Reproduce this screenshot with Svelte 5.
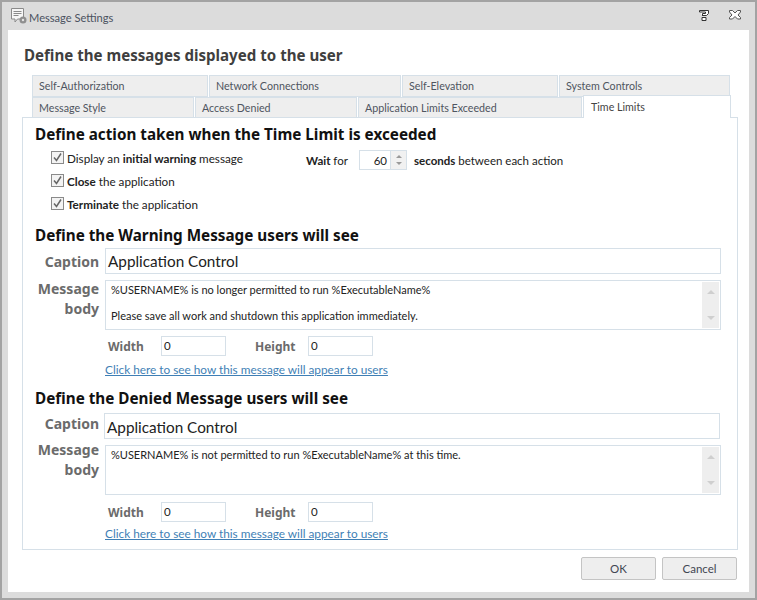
<script>
	const topTabs = ["Self-Authorization", "Network Connections", "Self-Elevation", "System Controls"];
	const bottomTabs = ["Message Style", "Access Denied", "Application Limits Exceeded"];
	const checks = [
		{ pre: "Display an ", bold: "initial warning", post: " message" },
		{ pre: "", bold: "Close", post: " the application" },
		{ pre: "", bold: "Terminate", post: " the application" }
	];

	const sections = [
		{
			title: "Define the Warning Message users will see",
			lines: ["%USERNAME% is no longer permitted to run %ExecutableName%", "", "Please save all work and shutdown this application immediately."],
			second: false
		},
		{
			title: "Define the Denied Message users will see",
			lines: ["%USERNAME% is not permitted to run %ExecutableName% at this time."],
			second: true
		}
	];
</script>

<div class="window">
	<header class="titlebar">
		<svg class="app-icon" width="18" height="18" viewBox="0 0 18 18">
			<path d="M.5 1.500h12v10.500h-6l-2.500 3v-3h-3.500z" fill="#f6f6f6" stroke="#8a8a8a" />
			<path d="M2.500 4.500h8M2.500 6.500h8M2.500 8.500h5" stroke="#8a8a8a" />
			<circle cx="12" cy="13" r="3.500" fill="#8f8f8f" />
			<circle cx="12" cy="13" r="1.200" fill="#e4e4e4" />
		</svg>
		<span class="title">Message Settings</span>
		<svg class="help" width="10" height="11" viewBox="0 0 10 11">
			<path d="M.5 .5h9v3l-2 2h-4.500M.5 .5v1.500h6v1.500h-3v2" fill="#fff" stroke="#333" />
			<path d="M3 7.500h4v3h-4z" fill="#fff" stroke="#333" />
		</svg>
		<svg class="close" width="12" height="10" viewBox="0 0 12 10">
			<path d="M.5 .5h3l2.500 2.500 2.500-2.500h3v1.500l-2.500 3 2.500 2.500v1.500h-3l-2.500-2.500-2.500 2.500h-3v-1.500l2.500-2.500-2.500-3z" fill="#fff" stroke="#555" />
		</svg>
	</header>

	<main class="client">
		<h1>Define the messages displayed to the user</h1>

		<nav class="tabs">
			<div class="tab-row top">
				{#each topTabs as tab}
					<div class="tab">{tab}</div>
				{/each}
			</div>
			<div class="tab-row bottom">
				{#each bottomTabs as tab}
					<div class="tab">{tab}</div>
				{/each}
				<div class="tab active">Time Limits</div>
			</div>
		</nav>

		<section class="panel">
			<h2 class="first">Define action taken when the Time Limit is exceeded</h2>

			<div class="actions">
				<div class="checks">
					{#each checks as check}
						<label class="check">
							<span class="box">
								<svg width="11" height="11" viewBox="0 0 11 11"><path d="M2 5.500l2.500 3 4.500-7" fill="none" stroke="#666" stroke-width="1.500" /></svg>
							</span>
							<span>{check.pre}<b>{check.bold}</b>{check.post}</span>
						</label>
					{/each}
				</div>
				<div class="wait">
					<span class="wait-label"><b>Wait</b> for</span>
					<div class="spin">
						<span class="spin-value">60</span>
						<span class="spin-arrows"><i class="up"></i><i class="down"></i></span>
					</div>
					<span class="wait-tail"><b>seconds</b> between each action</span>
				</div>
			</div>

			{#each sections as section}
				<div class:second={section.second}>
					<h2>{section.title}</h2>
					<div class="field caption-row">
						<span class="field-label">Caption</span>
						<div class="caption-input">Application Control</div>
					</div>
					<div class="field body-row">
						<span class="field-label body-label">Message<br />body</span>
						<div class="body-box">
							<div class="body-text">
								{#each section.lines as line}
									<p>{line}</p>
								{/each}
							</div>
							<div class="scrollbar"><i class="up"></i><i class="down"></i></div>
						</div>
					</div>
					<div class="size-row">
						<span class="size-label w">Width</span>
						<div class="size-input">0</div>
						<span class="size-label h">Height</span>
						<div class="size-input">0</div>
					</div>
					<a class="preview" href="#preview">Click here to see how this message will appear to users</a>
				</div>
			{/each}
		</section>

		<footer class="buttons">
			<button>OK</button>
			<button>Cancel</button>
		</footer>
	</main>
</div>

<style>
	:global(body) {
		background: #fff;
	}

	.window {
		box-sizing: border-box;
		width: 757px;
		height: 600px;
		background: #dcdcdc;
		border: 2px solid #a3a3a3;
		padding: 0 6px 6px;
		display: flex;
		flex-direction: column;
		font-family: Lato, sans-serif;
		color: #222;
	}

	.titlebar {
		height: 28px;
		flex: none;
		display: flex;
		align-items: center;
		font-size: 11.100px;
		color: #4b5260;
	}

	.app-icon {
		margin: 0 0 0 3px;
	}

	.title {
		flex: 1;
		padding-top: 3px;
	}

	.help {
		margin-right: 20px;
		margin-top: -2px;
	}

	.close {
		margin-right: 8px;
		margin-top: -2px;
	}

	.client {
		flex: 1;
		background: #fff;
		padding: 0 11px 0 14px;
		display: flex;
		flex-direction: column;
	}

	h1,
	h2 {
		margin: 0;
		font-family: "Noto Sans", sans-serif;
		font-weight: 700;
	}

	h1 {
		font-size: 15.100px;
		line-height: 20px;
		margin: 15px 0 0 2px;
		color: #3f3f3f;
	}

	h2 {
		font-size: 15.250px;
		line-height: 20px;
		margin: 0 0 3px 12px;
		color: #111;
		padding-top: 13px;
	}

	h2.first {
		padding-top: 6px;
		margin-bottom: 0;
	}

	.tabs {
		margin: 10px 0 0 10px;
		font-size: 10.700px;
		color: #4f5560;
	}

	.tab-row {
		display: flex;
		gap: 1px;
	}

	.tab {
		box-sizing: border-box;
		background: #eeeeee;
		border: 1px solid #d6e0e8;
		border-bottom: 0;
		padding-left: 6px;
		display: flex;
		align-items: center;
	}

	.top .tab {
		height: 22px;
		border-bottom: 1px solid #d6e0e8;
		padding-bottom: 2px;
	}

	.top .tab:nth-child(1) {
		width: 176px;
	}

	.top .tab:nth-child(2) {
		width: 192px;
	}

	.top .tab:nth-child(3) {
		width: 156px;
	}

	.top .tab:nth-child(4) {
		width: 171px;
	}

	.bottom {
		height: 20px;
		align-items: flex-end;
	}

	.bottom .tab {
		height: 20px;
	}

	.bottom .tab:nth-child(1) {
		width: 162px;
	}

	.bottom .tab:nth-child(2) {
		width: 162px;
	}

	.bottom .tab:nth-child(3) {
		width: 224px;
	}

	.bottom .tab.active {
		width: 148px;
		height: 23px;
		margin-top: -2px;
		margin-bottom: -1px;
		background: #fff;
		padding: 0 0 1px 7px;
		position: relative;
		z-index: 1;
		color: #444;
	}

	.panel {
		box-sizing: border-box;
		height: 433px;
		border: 1px solid #d6e0e8;
		font-size: 11.500px;
	}

	.actions {
		display: flex;
		height: 62px;
		margin-top: 6px;
	}

	.checks {
		width: 283px;
		padding: 1px 0 0 28px;
		box-sizing: border-box;
		display: flex;
		flex-direction: column;
		gap: 10px;
		font-size: 11.700px;
	}

	.check {
		display: flex;
		align-items: center;
		gap: 3px;
		height: 13px;
	}

	.box {
		box-sizing: border-box;
		width: 13px;
		height: 13px;
		border: 1px solid #8a8a8a;
		background: #f3f3f3;
		display: flex;
		align-items: center;
		justify-content: center;
	}

	.wait {
		display: flex;
		align-items: center;
		height: 20px;
	}

	.wait-label {
		width: 53px;
	}

	.spin {
		box-sizing: border-box;
		width: 48px;
		height: 20px;
		border: 1px solid #d6e0e8;
		display: flex;
		align-items: center;
	}

	.spin-value {
		flex: 1;
		text-align: right;
		padding-right: 3px;
	}

	.spin-arrows {
		width: 15px;
		height: 18px;
		background: #f1f1f1;
		border-left: 1px solid #d6e0e8;
		display: flex;
		flex-direction: column;
		align-items: center;
		justify-content: center;
		gap: 4px;
	}

	.up,
	.down {
		display: block;
		width: 0;
		height: 0;
		border-left: 3px solid transparent;
		border-right: 3px solid transparent;
	}

	.up {
		border-bottom: 3px solid #9a9a9a;
	}

	.down {
		border-top: 3px solid #9a9a9a;
	}

	.wait-tail {
		margin-left: 7px;
	}

	.second h2 {
		padding-top: 11px;
		margin-bottom: 5px;
	}

	.field {
		display: flex;
	}

	.field-label {
		width: 76px;
		text-align: right;
		font-family: "Noto Sans", sans-serif;
		font-weight: 700;
		font-size: 14px;
		color: #6b6b6b;
		margin-right: 6px;
		flex: none;
	}

	.caption-row {
		align-items: center;
		height: 26px;
	}

	.caption-input {
		box-sizing: border-box;
		width: 616px;
		height: 26px;
		border: 1px solid #d6e0e8;
		padding-left: 2px;
		font-size: 15.300px;
		line-height: 24px;
	}

	.second .caption-row {
		margin-left: -1px;
	}

	.second .caption-row .field-label {
		padding-bottom: 6px;
		margin-left: 1px;
		margin-right: 5px;
	}

	.second .caption-input {
		padding-top: 1px;
	}

	.body-row {
		margin-top: 6px;
	}

	.body-label {
		line-height: 20px;
		margin-top: -1px;
	}

	.second .body-label {
		margin-top: -5px;
	}

	.body-box {
		box-sizing: border-box;
		width: 616px;
		height: 50px;
		border: 1px solid #d6e0e8;
		display: flex;
		padding: 1px;
	}

	.body-text {
		flex: 1;
		font-size: 11px;
		line-height: 13px;
		padding: 1px 0 0 4px;
	}

	.body-text p {
		margin: 0;
		min-height: 13px;
	}

	.scrollbar {
		width: 17px;
		background: #eeeeee;
		display: flex;
		flex-direction: column;
		align-items: center;
		justify-content: space-between;
		padding: 8px 0;
		box-sizing: border-box;
	}

	.scrollbar .up {
		border-bottom-color: #cfcfcf;
		border-left-width: 4px;
		border-right-width: 4px;
		border-bottom-width: 4px;
	}

	.scrollbar .down {
		border-top-color: #cfcfcf;
		border-left-width: 4px;
		border-right-width: 4px;
		border-top-width: 4px;
	}

	.size-row {
		display: flex;
		align-items: center;
		height: 20px;
		margin: 6px 0 0 85px;
	}

	.second .size-row {
		margin-top: 7px;
	}

	.size-label {
		font-family: "Noto Sans", sans-serif;
		font-weight: 700;
		font-size: 12px;
		color: #6b6b6b;
	}

	.w {
		width: 53px;
	}

	.h {
		width: 53px;
		margin-left: 29px;
	}

	.size-input {
		box-sizing: border-box;
		width: 65px;
		height: 20px;
		border: 1px solid #d6e0e8;
		line-height: 18px;
		padding-left: 2px;
	}

	.preview {
		display: block;
		margin: 7px 0 0 82px;
		width: max-content;
		font-size: 11.800px;
		line-height: 14px;
		color: #3f7fb5;
	}

	.second .preview {
		margin-top: 5px;
	}

	.buttons {
		display: flex;
		justify-content: flex-end;
		gap: 6px;
		margin: 7px 1px 0 0;
	}

	button {
		box-sizing: border-box;
		width: 75px;
		height: 23px;
		background: #eeeeee;
		border: 1px solid #c4c4c4;
		border-radius: 2px;
		font-family: Lato, sans-serif;
		font-size: 11.500px;
		color: #3f4652;
		padding: 0;
	}
</style>
